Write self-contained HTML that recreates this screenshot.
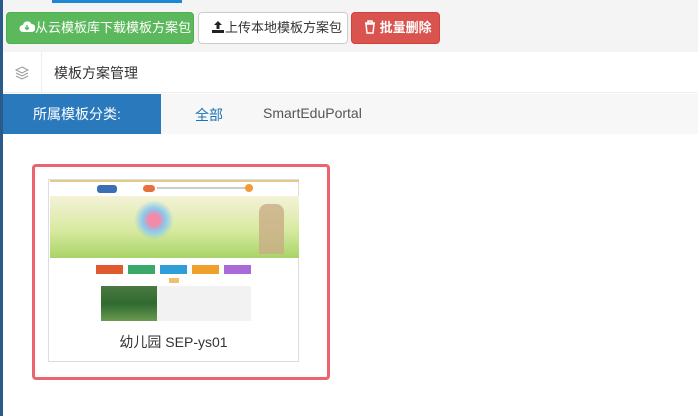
<!DOCTYPE html>
<html><head><meta charset="utf-8"><style>
*{margin:0;padding:0;box-sizing:border-box}
body{width:698px;height:416px;overflow:hidden;background:#fff;font-family:"Liberation Sans","Noto Sans CJK SC",sans-serif;position:relative}
.abs{position:absolute;white-space:nowrap}
.btn{position:absolute;top:12px;height:32px;border-radius:4px;font-size:13px;line-height:30px;padding-left:8px;border:1px solid;white-space:nowrap;overflow:hidden}
</style></head><body>
<div class="abs" style="left:0;top:0;width:698px;height:52px;background:#f4f4f4"></div>
<div class="abs" style="left:52px;top:0;width:130px;height:3px;background:#1e88d0"></div>
<div class="abs" style="left:0;top:0;width:3px;height:416px;background:#2a5a8a"></div>
<div class="btn" style="left:6px;width:188px;background:#5cb85c;border-color:#4cae4c;color:#fff;padding-left:12px">
<svg width="16" height="14" viewBox="0 0 16 14" style="vertical-align:-2px"><path d="M4 12a3.5 3.5 0 0 1 0-7 4.5 4.5 0 0 1 8.5-1A3.5 3.5 0 0 1 12.5 12z" fill="#fff"/><path d="M8 5v4M6 7.5l2 2 2-2" stroke="#5cb85c" stroke-width="1.5" fill="none"/></svg>从云模板库下载模板方案包</div>
<div class="btn" style="left:198px;width:150px;background:#fff;border-color:#ccc;color:#333;padding-left:12px">
<svg width="14" height="14" viewBox="0 0 14 14" style="vertical-align:-2px"><path d="M7 1l-4 4h2.5v4h3V5H11z M1 10h12v3H1z" fill="#222"/></svg>上传本地模板方案包</div>
<div class="btn" style="left:351px;width:89px;background:#d9534f;border-color:#d43f3a;color:#fff;font-weight:bold;padding-left:12px">
<svg width="12" height="14" viewBox="0 0 12 14" style="vertical-align:-2px"><path d="M1 3h10M4 3V1h4v2M2 4h8l-1 9H3z" stroke="#fff" stroke-width="1.5" fill="none"/></svg> 批量删除</div>
<div class="abs" style="left:3px;top:52px;width:695px;height:41px;background:#fff;border-bottom:1px solid #eee"></div>
<div class="abs" style="left:41px;top:52px;width:1px;height:40px;background:#eee"></div>
<svg class="abs" style="left:14px;top:65px" width="16" height="16" viewBox="0 0 16 16"><path d="M8 2l6 3-6 3-6-3z M2 8l6 3 6-3 M2 11l6 3 6-3" stroke="#999" fill="none"/></svg>
<div class="abs" style="left:54px;top:63px;font-size:14px;color:#333">模板方案管理</div>
<div class="abs" style="left:3px;top:94px;width:695px;height:40px;background:#f7f7f7"></div>
<div class="abs" style="left:3px;top:94px;width:158px;height:40px;background:#2a79bd;color:#fff;font-size:14px;line-height:40px;padding-left:30px">所属模板分类:</div>
<div class="abs" style="left:195px;top:105px;font-size:14px;color:#1a73b8">全部</div>
<div class="abs" style="left:263px;top:105px;font-size:14px;color:#555">SmartEduPortal</div>
<div class="abs" style="left:32px;top:164px;width:298px;height:216px;border:3px solid #ec6470;border-radius:4px"></div>
<div class="abs" style="left:48px;top:179px;width:251px;height:183px;border:1px solid #ddd;background:#fff">
<div class="abs" style="left:1px;top:0;width:249px;height:2px;background:#e5c98a"></div>
<div class="abs" style="left:48px;top:5px;width:20px;height:8px;background:#3b6fb5;border-radius:3px"></div>
<div class="abs" style="left:94px;top:5px;width:12px;height:7px;background:#e8703a;border-radius:4px"></div>
<div class="abs" style="left:108px;top:7px;width:92px;height:2px;background:#ccc"></div>
<div class="abs" style="left:196px;top:4px;width:8px;height:8px;background:#f29a3a;border-radius:50%"></div>
<div class="abs" style="left:1px;top:16px;width:249px;height:62px;background:linear-gradient(180deg,#f4f2d8,#d8eaa0 55%,#a8d468)"></div>
<div class="abs" style="left:210px;top:24px;width:25px;height:50px;background:#c9ad86;border-radius:8px 8px 0 0;opacity:.8"></div>
<div class="abs" style="left:85px;top:20px;width:40px;height:40px;background:radial-gradient(circle,#f28aa8 20%,#8ac8f0 40%,transparent 70%)"></div>
<div class="abs" style="left:47px;top:85px;width:27px;height:9px;background:#e15a2e"></div>
<div class="abs" style="left:79px;top:85px;width:27px;height:9px;background:#3aa86a"></div>
<div class="abs" style="left:111px;top:85px;width:27px;height:9px;background:#2f9ed8"></div>
<div class="abs" style="left:143px;top:85px;width:27px;height:9px;background:#f0a02a"></div>
<div class="abs" style="left:175px;top:85px;width:27px;height:9px;background:#a96ad8"></div>
<div class="abs" style="left:120px;top:98px;width:10px;height:5px;background:#f0c070"></div>
<div class="abs" style="left:52px;top:106px;width:56px;height:35px;background:linear-gradient(#4a7a40,#2f6a30 50%,#6a9a50)"></div>
<div class="abs" style="left:108px;top:106px;width:94px;height:35px;background:#f2f2f2"></div>
<div class="abs" style="left:0;top:152px;width:249px;text-align:center;font-size:14px;color:#333">幼儿园 SEP-ys01</div>
</div>
</body></html>
